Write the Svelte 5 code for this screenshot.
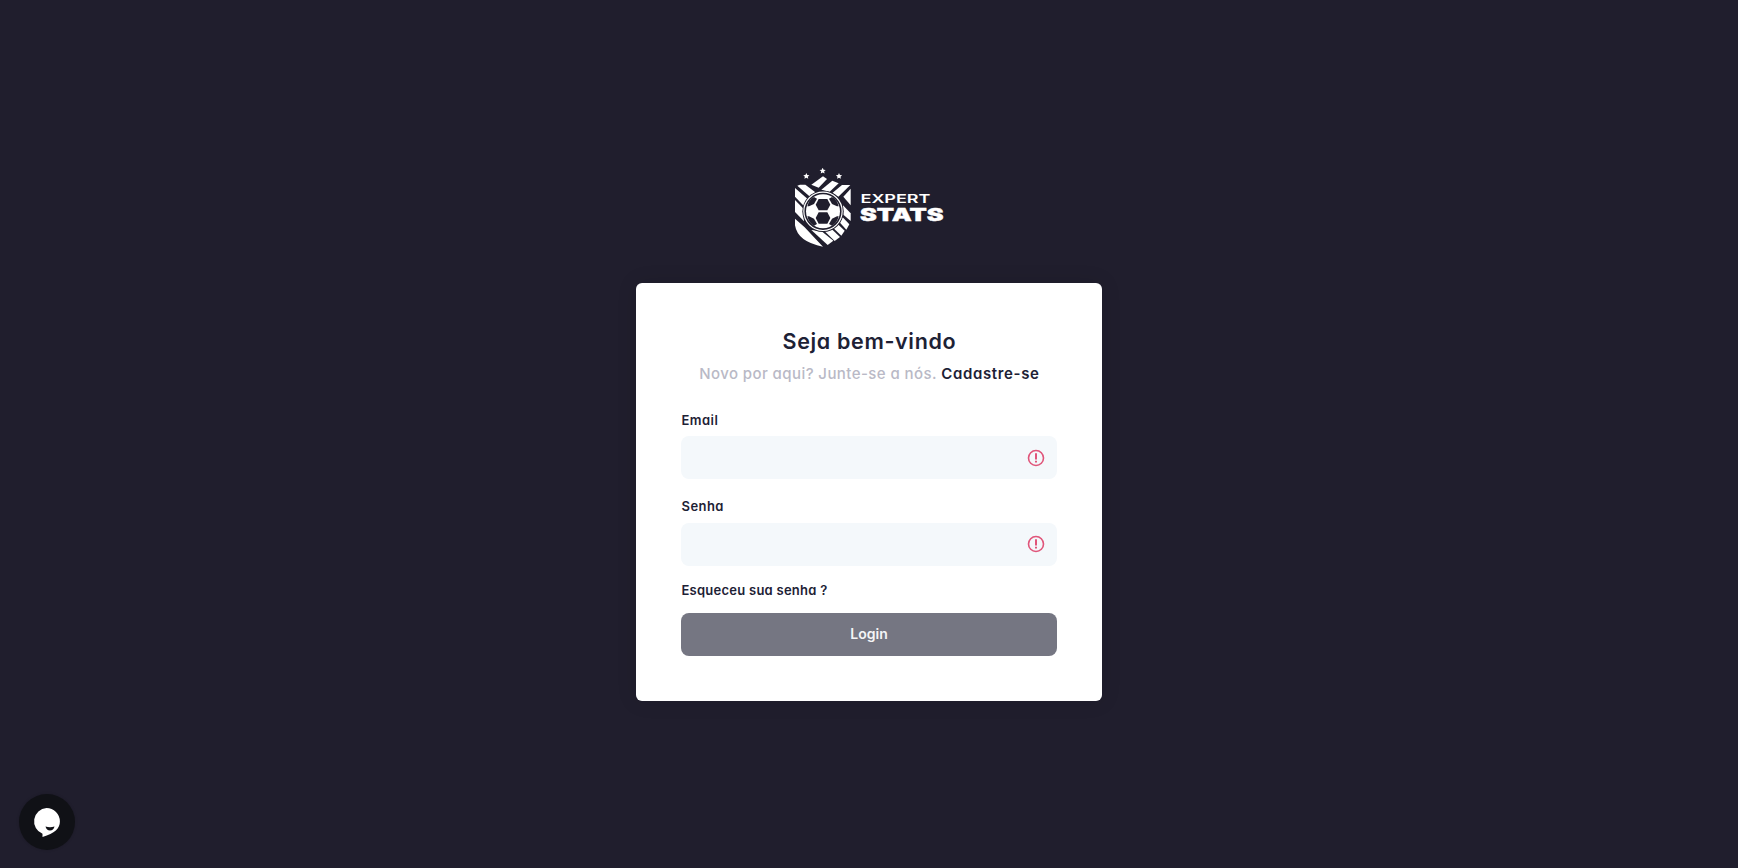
<script>
  const fields = [
    { id: 'email', label: 'Email', type: 'email' },
    { id: 'senha', label: 'Senha', type: 'password' }
  ];
</script>

<main>
  <svg class="logo" width="150" height="80" viewBox="0 0 150 80" role="img" aria-label="Expert Stats">
    <g transform="translate(-10 -8) scale(.33333)" fill="#fff">
      <path id="star" d="m116 23 2.800 6 6.500 .7-4.900 4.400 1.400 6.500-5.800-3.300-5.800 3.300 1.400-6.500-4.900-4.400 6.500-.7z" />
      <use href="#star" x="-49" y="16" />
      <use href="#star" x="49" y="16" />
      <path d="M82 74 117 49 129 57 104 83Z" />
      <path d="M112 89 145 62 164 70 137 95Z" />
      <path d="M146 98 174 75H199L163 110Z" />
      <path d="M178 110 200 86V136Z" />
      <path d="M40 77 48 74H64L94 97 78 110Z" />
      <path d="M33 84 71 117 59 137 33 110Z" />
      <path d="M33 120 57 145 60 184 33 156Z" />
      <path d="M33 176 62 202 90 232 117 260Q41 246 33 196Z" />
      <path d="M82 210 112 213 148 242 131 255Z" />
      <path d="M122 214 142 206 168 231 152 243Z" />
      <path d="M148 204 161 192 182 212 172 227Z" />
      <path d="M166 186 176 172 196 193 187 209Z" />
      <path d="M177 136 200 160V183L178 164Z" />
    </g>
    <g transform="translate(29 43.300) scale(.33333)">
      <circle r="62" fill="#201e2d" />
      <circle r="57.500" fill="none" stroke="#fff" stroke-width="3.500" />
      <circle r="51" fill="#fff" />
      <g fill="#201e2d">
        <path d="M-13-37H13L22-20 13-3H-13L-22-20Z" />
        <path d="M-13 37H13L22 20 13 3H-13L-22 20Z" />
        <path id="patch" d="M-47-15Q-43-35-27-43L-18-38-27-22-42-15Z" />
        <use href="#patch" transform="scale(-1 1)" />
        <use href="#patch" transform="scale(1 -1)" />
        <use href="#patch" transform="scale(-1 -1)" />
      </g>
    </g>
    <g class="brand">
      <text x="66.500" y="35.300" font-size="12.400" font-weight="600" textLength="70" lengthAdjust="spacingAndGlyphs">EXPERT</text>
      <text x="66" y="52.500" font-size="17.600" font-weight="900" textLength="83.500" lengthAdjust="spacingAndGlyphs" stroke="#fff" stroke-width=".4">STATS</text>
    </g>
  </svg>

  <section class="card">
    <h1>Seja bem-vindo</h1>
    <p class="lead">Novo por aqui? Junte-se a nós. <a href="#cadastro">Cadastre-se</a></p>
    <form>
      {#each fields as field}
        <div class="field {field.id}">
          <label for={field.id}>{field.label}</label>
          <div class="control">
            <input id={field.id} type={field.type} />
            <svg width="18" height="18" viewBox="0 0 18 18" fill="none" stroke="#e0557a">
              <circle cx="9" cy="9" r="7.500" stroke-width="1.600" />
              <path d="M9 4.300V10.600M9 11.700V13.600" stroke-width="2" />
            </svg>
          </div>
        </div>
      {/each}
      <a class="forgot" href="#senha">Esqueceu sua senha ?</a>
      <button type="button">Login</button>
    </form>
  </section>

  <button class="chat" aria-label="Chat">
    <svg width="56" height="56" viewBox="0 0 56 56">
      <path d="M27.500 14a13.400 13.400 0 0 1 13.400 13.400c0 7-5 11.600-17.400 15.600v-3.200A13.400 13.400 0 0 1 27.500 14Z" fill="#fff" />
      <path d="M26.500 32.500Q31 34 35.500 32.500Q34.500 36.500 31 36.500T26.500 32.500Z" fill="#101116" />
    </svg>
  </button>
</main>

<style>
  :global(body) { background: #201e2d; }
  main {
    box-sizing: border-box;
    height: 868px;
    padding-top: 168px;
    display: flex;
    flex-direction: column;
    align-items: center;
    font-family: Inter, "Open Sans", sans-serif;
    font-feature-settings: "cv11";
    color: #1d2135;
    overflow: hidden;
  }
  .logo { display: block; flex: none; }
  .brand { fill: #fff; font-family: Inter, sans-serif; }
  .card {
    box-sizing: border-box;
    width: 466px;
    height: 417.600px;
    margin-top: 35.400px;
    margin-left: .8px;
    padding: 45px;
    border-radius: 6px;
    background: #fff;
    box-shadow: 0 0 20px rgba(0, 0, 0, .12);
  }
  h1 { margin: 0; text-align: center; font-size: 21.500px; line-height: 26px; font-weight: 600; letter-spacing: .66px; white-space: nowrap; }
  .lead { margin: 9px 0 0; text-align: center; font-size: 15px; line-height: 22px; font-weight: 500; color: #b9b9c6; white-space: nowrap; letter-spacing: .42px; }
  a { color: #1d2135; text-decoration: none; }
  .lead a { font-weight: 600; letter-spacing: .65px; }
  form { display: flex; flex-direction: column; margin: 24.600px .4px 0 -.4px; }
  .field { display: flex; flex-direction: column; gap: 6px; margin-bottom: 17px; }
  .email .control svg { margin-top: 1px; }
  .senha { gap: 7px; margin-bottom: 14px; }
  label, .forgot { font-size: 13px; line-height: 20px; font-weight: 600; letter-spacing: .25px; padding-left: .5px; }
  label { letter-spacing: .45px; }
  .control { display: flex; align-items: center; height: 42.800px; border-radius: 8px; background: #f4f8fb; padding-right: 12px; }
  input { flex: 1; min-width: 0; border: 0; outline: 0; background: transparent; padding: 0 12px; }
  form button { height: 43px; margin-top: 13px; padding: 0 0 2px; border: 0; border-radius: 8px; background: #757682; color: #f4f4f6; font: 600 14px Inter, sans-serif; }
  .chat { position: absolute; left: 18.600px; bottom: 17.600px; width: 56px; height: 56px; padding: 0; border: 0; border-radius: 50%; background: #101116; box-shadow: 0 0 3px rgba(0,0,0,.2); }
  .chat svg { display: block; }
</style>
